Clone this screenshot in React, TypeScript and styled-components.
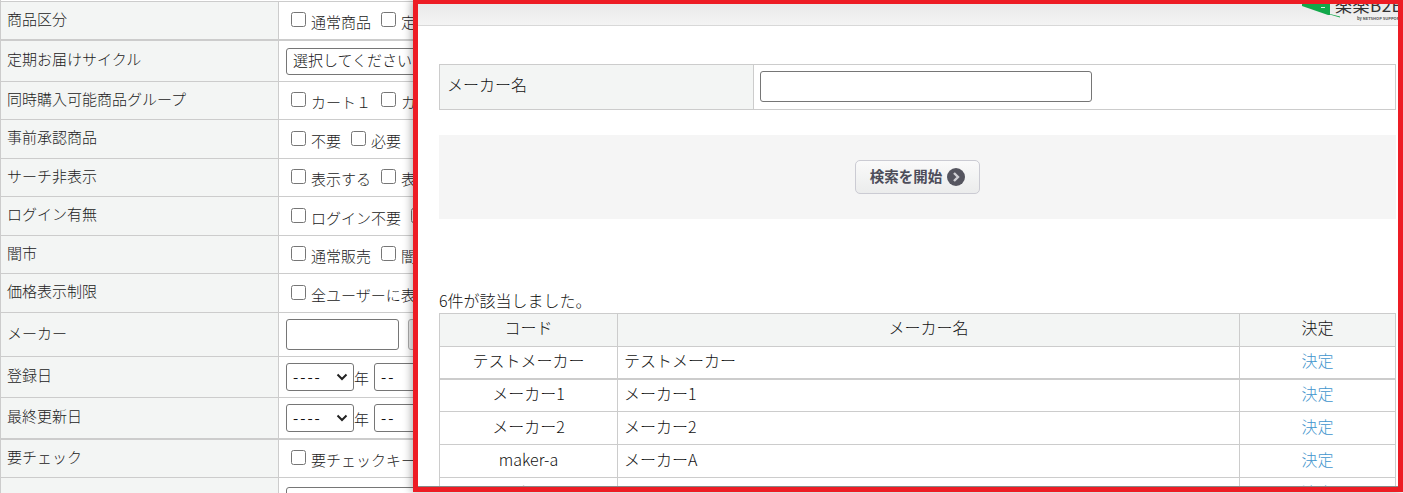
import React from 'react'
import styled, { createGlobalStyle } from 'styled-components'

const GlobalStyle = createGlobalStyle`
  html, body {
    margin: 0;
    padding: 0;
    height: 493px;
    overflow: hidden;
    background: #fff;
  }
  body {
    font-family: "Noto Sans CJK JP", "Noto Sans", sans-serif;
    font-weight: 300;
    color: #222;
  }
`

const chevron =
  "url(\"data:image/svg+xml,%3Csvg xmlns='http://www.w3.org/2000/svg' width='12' height='8' viewBox='0 0 12 8'%3E%3Cpath d='M1.5 1.5L6 6l4.5-4.5' fill='none' stroke='%23222' stroke-width='2'/%3E%3C/svg%3E\")"

const Page = styled.div`
  position: relative;
  width: 1403px;
  height: 493px;
  overflow: hidden;
`

const FormTable = styled.div`
  display: flex;
  flex-direction: column;
  padding-top: 1px;
  border-left: 1px solid #ccc;
`

const FormRow = styled.div<{ $h: number; $heavy?: boolean }>`
  box-sizing: border-box;
  display: grid;
  grid-template-columns: 278px 1fr;
  height: ${(p) => p.$h}px;
  border-top: ${(p) => (p.$heavy ? 2 : 1)}px solid #ccc;
`

const FormLabel = styled.div`
  display: flex;
  align-items: center;
  padding: 0 0 4px 6px;
  background: #f3f5f4;
  border-right: 1px solid #ccc;
  font-size: 15px;
  line-height: 20px;
  color: #222;
`

const FormValue = styled.div`
  display: flex;
  align-items: center;
  gap: 5px;
  padding: 0 0 0 7px;
  font-size: 15px;
  white-space: nowrap;
`

const CheckGroup = styled.label`
  display: flex;
  align-items: center;
  padding-left: 5px;
  color: #222;
`

const CheckLabel = styled.span`
  margin-left: 5px;
  position: relative;
  top: 1px;
`

const Check = styled.input.attrs({ type: 'checkbox' })`
  width: 15px;
  height: 15px;
  margin: 0;
  position: relative;
  top: -1px;
`

const WideSelect = styled.select`
  box-sizing: border-box;
  appearance: none;
  width: 1200px;
  height: 27px;
  padding: 0 6px 3px;
  border: 1px solid #767676;
  border-radius: 3px;
  background: #fff;
  font-family: inherit;
  font-weight: inherit;
  font-size: 15px;
  color: #111;
`

const DateSelect = styled.select<{ $w: number }>`
  box-sizing: border-box;
  appearance: none;
  width: ${(p) => p.$w}px;
  height: 28px;
  padding: 0 6px 2px;
  border: 1px solid #767676;
  border-radius: 3px;
  background: #fff ${chevron} no-repeat right 5px center;
  font-family: inherit;
  font-weight: 400;
  font-size: 15px;
  letter-spacing: 2px;
  color: #111;
`

const DateGroup = styled.div`
  display: flex;
  align-items: center;
  font-size: 15px;
`

const MakerInput = styled.input`
  box-sizing: border-box;
  width: 113px;
  height: 31px;
  border: 1px solid #767676;
  border-radius: 3px;
`

const GhostButton = styled.button`
  box-sizing: border-box;
  width: 60px;
  height: 31px;
  margin-left: 4px;
  border: 1px solid #aaa;
  border-radius: 3px;
  background: #eee;
`

const Modal = styled.div`
  position: absolute;
  top: 0;
  left: 413px;
  box-sizing: border-box;
  display: flex;
  flex-direction: column;
  width: 990px;
  height: 492px;
  overflow: hidden;
  border: solid #ed1c24;
  border-width: 4px 5px 5px 5px;
  background: #fff;
  box-shadow: -2px 0 8px rgba(0, 0, 0, 0.3);
`

const ModalHeader = styled.div`
  box-sizing: border-box;
  flex: none;
  display: flex;
  justify-content: flex-end;
  height: 22px;
  overflow: hidden;
  background: linear-gradient(#e9e9e9, #f4f4f4);
  border-bottom: 1px solid #d8d8d8;
`

const Logo = styled.div`
  display: flex;
  align-items: flex-start;
  width: 96px;
  height: 22px;
  overflow: hidden;
  white-space: nowrap;
`

const LogoMark = styled.svg`
  flex: none;
`

const LogoText = styled.div`
  display: flex;
  flex-direction: column;
  margin: -9px 0 0 -5px;
`

const LogoName = styled.span`
  font-size: 17px;
  font-weight: 400;
  line-height: 20px;
  letter-spacing: 0.5px;
  color: #333;
`

const LogoSub = styled.span`
  margin-top: 1px;
  padding-left: 22px;
  font-size: 4px;
  line-height: 5px;
  font-weight: 700;
  color: #555;
`

const ModalBody = styled.div`
  flex: 1;
  position: relative;
  min-height: 0;
  overflow: hidden;
  padding: 38px 0 0 21px;
  border-bottom: 1px solid #888;
  color: #111;
  font-size: 16px;
`

const Scrollbar = styled.div`
  position: absolute;
  left: 0;
  bottom: -1px;
  width: 92px;
  height: 1px;
  background: #555;
`

const SearchTable = styled.div`
  box-sizing: border-box;
  display: grid;
  grid-template-columns: 314px 1fr;
  width: 957px;
  height: 46px;
  border: 1px solid #ccc;
`

const SearchLabel = styled.div`
  display: flex;
  align-items: center;
  padding: 0 0 6px 7px;
  background: #f3f5f4;
  border-right: 1px solid #ccc;
`

const SearchValue = styled.div`
  display: flex;
  align-items: center;
  padding: 0 0 2px 6px;
`

const SearchInput = styled.input`
  box-sizing: border-box;
  width: 332px;
  height: 31px;
  border: 1px solid #767676;
  border-radius: 3px;
`

const ButtonPanel = styled.div`
  display: flex;
  align-items: center;
  justify-content: center;
  width: 957px;
  height: 84px;
  margin-top: 25px;
  background: #f5f5f5;
`

const StartButton = styled.button`
  box-sizing: border-box;
  display: flex;
  align-items: center;
  justify-content: center;
  gap: 5px;
  width: 125px;
  height: 34px;
  padding: 0;
  border: 1px solid #cbcbd3;
  border-radius: 5px;
  background: linear-gradient(#fafafa, #ebecec);
  font-family: inherit;
  font-size: 14.5px;
  font-weight: 700;
  color: #4d4d5a;
`

const StartLabel = styled.span`
  margin-bottom: 4px;
`

const ResultCount = styled.div`
  margin-top: 69px;
  height: 25px;
  line-height: 25px;
  font-size: 16px;
  color: #111;
`

const ResultTable = styled.table`
  width: 957px;
  border-collapse: collapse;
  table-layout: fixed;
  font-size: 16px;
`

const HeadCell = styled.th<{ $w?: number }>`
  box-sizing: border-box;
  width: ${(p) => (p.$w ? `${p.$w}px` : 'auto')};
  height: 33px;
  padding: 0 0 6px;
  border: 1px solid #ccc;
  background: #f3f5f4;
  font-weight: inherit;
  text-align: center;
`

const ResultRow = styled.tr<{ $heavy?: boolean }>`
  height: ${(p) => (p.$heavy ? 32 : 33)}px;
  border-bottom: ${(p) => (p.$heavy ? 2 : 1)}px solid #ccc;
`

const Cell = styled.td<{ $center?: boolean }>`
  box-sizing: border-box;
  padding: 0 6px 4px;
  border-left: 1px solid #ccc;
  border-right: 1px solid #ccc;
  text-align: ${(p) => (p.$center ? 'center' : 'left')};
  color: #111;
`

const DecideLink = styled.a`
  color: #3f95cd;
  text-decoration: none;
`

const makers = [
  { code: 'テストメーカー', name: 'テストメーカー', heavy: true },
  { code: 'メーカー1', name: 'メーカー1' },
  { code: 'メーカー2', name: 'メーカー2' },
  { code: 'maker-a', name: 'メーカーA' },
  { code: 'maker-b', name: 'メーカーB' },
]

const CheckOptions = ({ options }: { options: string[] }) => (
  <FormValue>
    {options.map((o) => (
      <CheckGroup key={o}>
        <Check />
        <CheckLabel>{o}</CheckLabel>
      </CheckGroup>
    ))}
  </FormValue>
)

const DateFields = () => (
  <FormValue>
    <DateGroup>
      <DateSelect $w={68}>
        <option>----</option>
      </DateSelect>
      年
    </DateGroup>
    <DateGroup>
      <DateSelect $w={60}>
        <option>--</option>
      </DateSelect>
      月
    </DateGroup>
  </FormValue>
)

const App = () => {
  return (
    <Page>
      <GlobalStyle />
      <FormTable>
        <FormRow $h={38}>
          <FormLabel>商品区分</FormLabel>
          <CheckOptions options={['通常商品', '定期商品']} />
        </FormRow>
        <FormRow $h={42} $heavy>
          <FormLabel>定期お届けサイクル</FormLabel>
          <FormValue>
            <WideSelect>
              <option>選択してください</option>
            </WideSelect>
          </FormValue>
        </FormRow>
        <FormRow $h={38}>
          <FormLabel>同時購入可能商品グループ</FormLabel>
          <CheckOptions options={['カート１', 'カート２']} />
        </FormRow>
        <FormRow $h={39}>
          <FormLabel>事前承認商品</FormLabel>
          <CheckOptions options={['不要', '必要']} />
        </FormRow>
        <FormRow $h={38}>
          <FormLabel>サーチ非表示</FormLabel>
          <CheckOptions options={['表示する', '表示しない']} />
        </FormRow>
        <FormRow $h={39}>
          <FormLabel>ログイン有無</FormLabel>
          <CheckOptions options={['ログイン不要', 'ログイン必要']} />
        </FormRow>
        <FormRow $h={38}>
          <FormLabel>闇市</FormLabel>
          <CheckOptions options={['通常販売', '闇市販売']} />
        </FormRow>
        <FormRow $h={39}>
          <FormLabel>価格表示制限</FormLabel>
          <CheckOptions options={['全ユーザーに表示']} />
        </FormRow>
        <FormRow $h={44}>
          <FormLabel>メーカー</FormLabel>
          <FormValue>
            <MakerInput />
            <GhostButton />
          </FormValue>
        </FormRow>
        <FormRow $h={41}>
          <FormLabel>登録日</FormLabel>
          <DateFields />
        </FormRow>
        <FormRow $h={41}>
          <FormLabel>最終更新日</FormLabel>
          <DateFields />
        </FormRow>
        <FormRow $h={39} $heavy>
          <FormLabel>要チェック</FormLabel>
          <CheckOptions options={['要チェックキーワード']} />
        </FormRow>
        <FormRow $h={46}>
          <FormLabel>コード</FormLabel>
          <FormValue>
            <WideSelect>
              <option>選択してください</option>
            </WideSelect>
          </FormValue>
        </FormRow>
      </FormTable>

      <Modal>
        <ModalHeader>
          <Logo>
            <LogoMark width="38" height="14" viewBox="0 0 38 14">
              <polygon points="0,0 28,0 28,11 26,11 0,2" fill="#12a84a" />
              <polygon points="26,10 28,10 38,12.5 38,13.5" fill="#12a84a" />
              <rect x="19" y="3" width="4" height="1" fill="#d8f0de" />
            </LogoMark>
            <LogoText>
              <LogoName>楽楽B2B</LogoName>
              <LogoSub>by NETSHOP SUPPORT</LogoSub>
            </LogoText>
          </Logo>
        </ModalHeader>
        <ModalBody>
          <SearchTable>
            <SearchLabel>メーカー名</SearchLabel>
            <SearchValue>
              <SearchInput />
            </SearchValue>
          </SearchTable>
          <ButtonPanel>
            <StartButton>
              <StartLabel>検索を開始</StartLabel>
              <svg width="18" height="18" viewBox="0 0 18 18">
                <circle cx="9" cy="9" r="9" fill="#55555f" />
                <path d="M7 5l4 4-4 4" fill="none" stroke="#d0d0d4" strokeWidth="2.4" />
              </svg>
            </StartButton>
          </ButtonPanel>
          <ResultCount>6件が該当しました。</ResultCount>
          <ResultTable>
            <thead>
              <tr>
                <HeadCell $w={178}>コード</HeadCell>
                <HeadCell>メーカー名</HeadCell>
                <HeadCell $w={156}>決定</HeadCell>
              </tr>
            </thead>
            <tbody>
              {makers.map((m) => (
                <ResultRow key={m.code} $heavy={m.heavy}>
                  <Cell $center>{m.code}</Cell>
                  <Cell>{m.name}</Cell>
                  <Cell $center>
                    <DecideLink href="#">決定</DecideLink>
                  </Cell>
                </ResultRow>
              ))}
            </tbody>
          </ResultTable>
          <Scrollbar />
        </ModalBody>
      </Modal>
    </Page>
  )
}

export default App
